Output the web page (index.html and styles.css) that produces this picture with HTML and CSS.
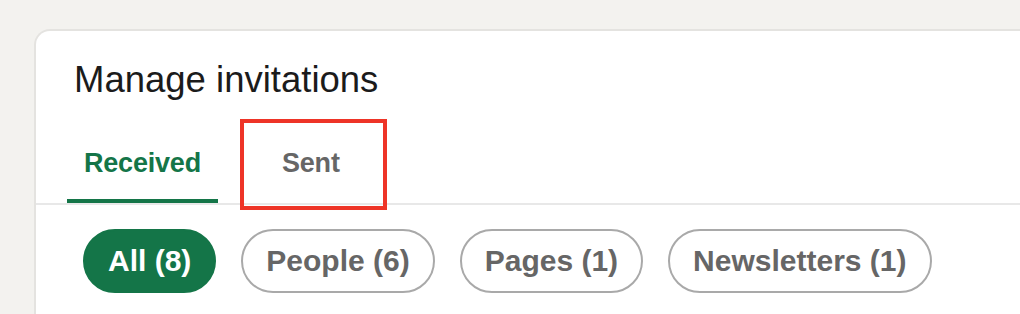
FILE: index.html
```html
<!DOCTYPE html>
<html lang="en">
<head>
<meta charset="utf-8">
<title>Manage invitations</title>
<link rel="stylesheet" href="styles.css">
</head>
<body>
<div class="page">
  <section class="card">
    <h2 class="title">Manage invitations</h2>
    <nav class="tabs">
      <a class="tab tab--active">Received</a>
      <a class="tab">Sent</a>
    </nav>
    <div class="pills">
      <button class="pill pill--active">All (8)</button>
      <button class="pill">People (6)</button>
      <button class="pill">Pages (1)</button>
      <button class="pill">Newsletters (1)</button>
    </div>
  </section>
  <div class="highlight"></div>
</div>
</body>
</html>
```

FILE: styles.css
```css
html, body {
  margin: 0;
  padding: 0;
  background: #f3f2ef;
  overflow: hidden;
  height: 314px;
}

.page {
  position: relative;
  height: 314px;
  box-sizing: border-box;
  padding: 29px 0 0 34px;
  font-family: "Liberation Sans", Arial, sans-serif;
}

.card {
  height: 285px;
  background: #ffffff;
  border: 2px solid #e4e3e0;
  border-right: 0;
  border-bottom: 0;
  border-top-left-radius: 16px;
  box-sizing: border-box;
}

.title {
  margin: 0;
  padding: 26px 0 0 38px;
  font-size: 36.5px;
  line-height: 45px;
  font-weight: 400;
  color: #1b1b1b;
}

.tabs {
  display: flex;
  gap: 47px;
  margin-top: 20px;
  padding-left: 31px;
  border-bottom: 2px solid #e8e8e8;
}

.tab {
  display: block;
  padding: 24px 17px 19px;
  font-size: 27px;
  line-height: 34px;
  font-weight: 700;
  letter-spacing: -0.2px;
  color: #666666;
  border-bottom: 4px solid transparent;
}

.tab--active {
  color: #147548;
  border-bottom-color: #147548;
}

.pills {
  display: flex;
  gap: 25px;
  padding: 24px 0 0 47px;
}

.pill {
  height: 64px;
  box-sizing: border-box;
  padding: 0 23px;
  border: 2px solid #a9a9a9;
  border-radius: 32px;
  background: #ffffff;
  font-family: "Liberation Sans", Arial, sans-serif;
  font-size: 30px;
  font-weight: 700;
  color: #666666;
  display: flex;
  align-items: center;
}

.pill--active {
  background: #147548;
  border-color: #147548;
  color: #ffffff;
}

.highlight {
  position: absolute;
  left: 240px;
  top: 119px;
  width: 147px;
  height: 91px;
  box-sizing: border-box;
  border: 4px solid #ee3427;
}
```
